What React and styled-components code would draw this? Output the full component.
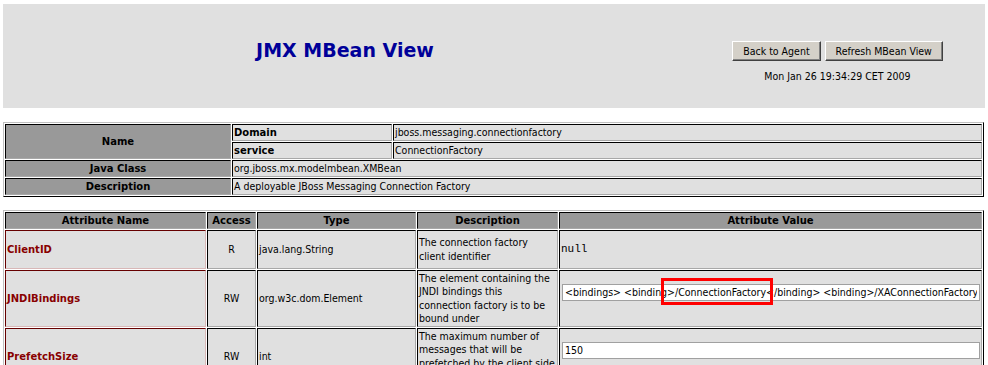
import React from "react";
import styled, { createGlobalStyle } from "styled-components";

const GlobalStyle = createGlobalStyle`
  html,
  body {
    background: #ffffff;
  }
  body {
    margin: 4px 3px 0 3px;
    overflow: hidden;
    font-family: "DejaVu Sans Condensed", "DejaVu Sans", sans-serif;
    font-size: 10.5px;
    color: #000000;
  }
`;

const Header = styled.div`
  display: flex;
  height: 104px;
  margin-right: -3px;
  background: #e0e0e0;
`;

const TitleCell = styled.div`
  width: 684px;
  box-sizing: border-box;
  display: flex;
  align-items: center;
  justify-content: center;
  padding-bottom: 12px;
`;

const Title = styled.h1`
  margin: 0;
  font-family: "DejaVu Sans", sans-serif;
  font-size: 19px;
  font-weight: bold;
  color: #000099;
`;

const ActionCell = styled.div`
  flex: 1;
  display: flex;
  flex-direction: column;
  align-items: center;
  padding-top: 37px;
`;

const Buttons = styled.div`
  display: flex;
  gap: 4px;
`;

const Button = styled.button`
  height: 20px;
  padding: 0 10px;
  background: #d4d0c8;
  border: 1px solid;
  border-color: #ffffff #404040 #404040 #ffffff;
  box-shadow: inset -1px -1px #808080;
  font-family: "DejaVu Sans Condensed", "DejaVu Sans", sans-serif;
  font-size: 10.5px;
  color: #000000;
`;

const Stamp = styled.div`
  margin-top: 9px;
  font-size: 10.5px;
  line-height: 13px;
`;

const Grid = styled.table`
  box-sizing: border-box;
  width: 981px;
  table-layout: fixed;
  border-collapse: separate;
  border-spacing: 1px;
  border: 1px solid;
  border-color: #c0c0c0 #000000 #000000 #c0c0c0;
  margin-top: ${(props) => props.$gap}px;
`;

const Col = styled.col`
  width: ${(props) => (props.$w ? `${props.$w}px` : "auto")};
`;

const Cell = styled.td`
  box-sizing: border-box;
  height: 17px;
  padding: 1px;
  border: 1px solid;
  border-color: #000000 #a8a8a8 #a8a8a8 #000000;
  background: #e0e0e0;
  line-height: 13px;
  text-align: ${(props) => props.$align || "left"};
  vertical-align: middle;
  white-space: nowrap;
  overflow: hidden;
`;

const HeadCell = styled(Cell).attrs({ as: "th" })`
  background: #999999;
  font-family: "DejaVu Sans", sans-serif;
  font-size: 10px;
  font-weight: bold;
  text-align: center;
`;

const LabelCell = styled(Cell)`
  font-family: "DejaVu Sans", sans-serif;
  font-size: 10px;
  font-weight: bold;
`;

const NameCell = styled(LabelCell)`
  color: #880000;
  border-color: #660000 #d8b8b8 #d8b8b8 #660000;
`;

const DescCell = styled(Cell)`
  line-height: 13.3px;
`;

const Code = styled.span`
  display: block;
  padding: 11px 0;
  font-family: "Liberation Mono", monospace;
  font-size: 11px;
  line-height: 13px;
`;

const InputWrap = styled.div`
  position: relative;
  padding: 0 0 13px 1px;
`;

const Field = styled.input`
  display: block;
  box-sizing: border-box;
  width: 100%;
  height: 17px;
  margin: 0;
  padding: 0 2px;
  background: #ffffff;
  border: 1px solid #a0a0a0;
  font-family: "DejaVu Sans Condensed", "DejaVu Sans", sans-serif;
  font-size: 10.5px;
  color: #000000;
  outline: none;
`;

const Highlight = styled.div`
  position: absolute;
  left: 100px;
  top: -6px;
  width: 112px;
  height: 27px;
  box-sizing: border-box;
  border: 3px solid #ff0000;
  pointer-events: none;
`;

const bindings =
  "<bindings> <binding>/ConnectionFactory</binding> <binding>/XAConnectionFactory</binding> <binding>java:/ConnectionFactory</binding> <binding>java:/XAConnectionFactory</binding> </bindings>";

const attributes = [
  {
    name: "ClientID",
    access: "R",
    type: "java.lang.String",
    desc: ["The connection factory", "client identifier"],
    value: { kind: "code", text: "null" },
  },
  {
    name: "JNDIBindings",
    access: "RW",
    type: "org.w3c.dom.Element",
    desc: [
      "The element containing the",
      "JNDI bindings this",
      "connection factory is to be",
      "bound under",
    ],
    value: { kind: "input", text: bindings, marked: true },
  },
  {
    name: "PrefetchSize",
    access: "RW",
    type: "int",
    desc: [
      "The maximum number of",
      "messages that will be",
      "prefetched by the client side",
      "consumer",
    ],
    value: { kind: "input", text: "150" },
  },
];

const Value = ({ value }) =>
  value.kind === "code" ? (
    <Code>{value.text}</Code>
  ) : (
    <InputWrap>
      <Field type="text" defaultValue={value.text} />
      {value.marked && <Highlight />}
    </InputWrap>
  );

const App = () => (
  <>
    <GlobalStyle />
    <Header>
      <TitleCell>
        <Title>JMX MBean View</Title>
      </TitleCell>
      <ActionCell>
        <Buttons>
          <Button>Back to Agent</Button>
          <Button>Refresh MBean View</Button>
        </Buttons>
        <Stamp>Mon Jan 26 19:34:29 CET 2009</Stamp>
      </ActionCell>
    </Header>

    <Grid $gap={14}>
      <colgroup>
        <Col $w={226} />
        <Col $w={160} />
        <Col />
      </colgroup>
      <tbody>
        <tr>
          <HeadCell rowSpan={2}>Name</HeadCell>
          <LabelCell>Domain</LabelCell>
          <Cell>jboss.messaging.connectionfactory</Cell>
        </tr>
        <tr>
          <LabelCell>service</LabelCell>
          <Cell>ConnectionFactory</Cell>
        </tr>
        <tr>
          <HeadCell>Java Class</HeadCell>
          <Cell colSpan={2}>org.jboss.mx.modelmbean.XMBean</Cell>
        </tr>
        <tr>
          <HeadCell>Description</HeadCell>
          <Cell colSpan={2}>A deployable JBoss Messaging Connection Factory</Cell>
        </tr>
      </tbody>
    </Grid>

    <Grid $gap={13}>
      <colgroup>
        <Col $w={201} />
        <Col $w={49} />
        <Col $w={159} />
        <Col $w={141} />
        <Col />
      </colgroup>
      <thead>
        <tr>
          <HeadCell>Attribute Name</HeadCell>
          <HeadCell>Access</HeadCell>
          <HeadCell>Type</HeadCell>
          <HeadCell>Description</HeadCell>
          <HeadCell>Attribute Value</HeadCell>
        </tr>
      </thead>
      <tbody>
        {attributes.map((attr) => (
          <tr key={attr.name}>
            <NameCell>{attr.name}</NameCell>
            <Cell $align="center">{attr.access}</Cell>
            <Cell>{attr.type}</Cell>
            <DescCell>
              {attr.desc.map((line, i) => (
                <React.Fragment key={i}>
                  {i > 0 && <br />}
                  {line}
                </React.Fragment>
              ))}
            </DescCell>
            <Cell>
              <Value value={attr.value} />
            </Cell>
          </tr>
        ))}
      </tbody>
    </Grid>
  </>
);

export default App;
